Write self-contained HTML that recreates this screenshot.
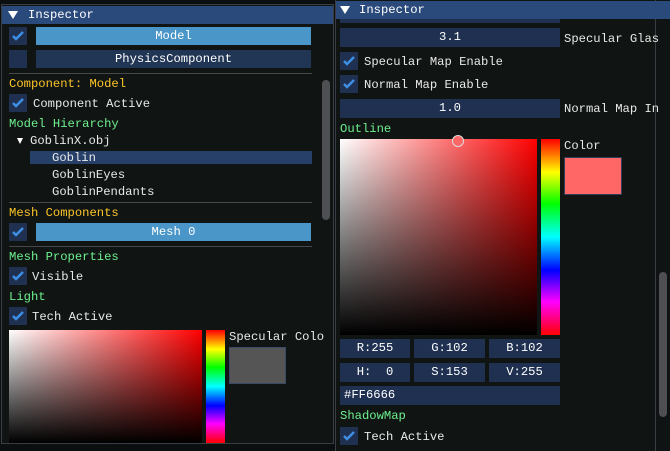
<!DOCTYPE html>
<html style="overflow:hidden;height:451px"><head><style>
*{margin:0;padding:0;box-sizing:border-box}
body{width:670px;height:451px;overflow:hidden;background:#0c0f0f;font-family:"Liberation Mono",monospace;font-size:12.2px;color:#e8e8e8;position:relative}
.a{position:absolute}
.win{position:absolute;background:#101514;border:1px solid #3a3d44}
.title{position:absolute;background:#2b4a7c;color:#fff;height:18px;line-height:18px}
.cb{position:absolute;width:18px;height:18px;background:#1f3050}
.cb svg{position:absolute;left:3px;top:4px}
.btn{position:absolute;height:18px;line-height:18px;text-align:center;color:#fff}
.lt{background:#4a96c8}
.dk{background:#213555}
.fld{position:absolute;background:#1f3050;height:19px;line-height:19px;text-align:center;color:#fff;white-space:pre}
.y{color:#fcc427}.g{color:#6ef08e}
.sep{position:absolute;height:1px;background:#45474d}
.t{position:absolute;white-space:pre;line-height:14px}
.sv{position:absolute;background:linear-gradient(to bottom,rgba(0,0,0,0),#000),linear-gradient(to right,#fff,#f00)}
.hue{position:absolute;background:linear-gradient(to bottom,#f00,#ff0 17%,#0f0 33%,#0ff 50%,#00f 67%,#f0f 83%,#f00)}
</style></head><body>
<div class="win" style="left:1px;top:4px;width:333px;height:440px"></div>
<div class="title" style="left:2px;top:6px;width:331px"><span class="a" style="left:6px;top:5px;width:0;height:0;border-left:5px solid transparent;border-right:5px solid transparent;border-top:8px solid #fff"></span><span class="a" style="left:26px">Inspector</span></div>
<div class="cb" style="left:9px;top:27px"><svg width="12" height="10"><path d="M1 5 L4 8 L11 1" stroke="#3d8fe6" stroke-width="2.5" fill="none"/></svg></div>
<div class="btn lt" style="left:36px;top:27px;width:275px">Model</div>
<div class="cb" style="left:9px;top:50px"></div>
<div class="btn dk" style="left:36px;top:50px;width:275px">PhysicsComponent</div>
<div class="sep" style="left:9px;top:73px;width:303px"></div>
<div class="t y" style="left:9px;top:77px">Component: Model</div>
<div class="cb" style="left:9px;top:94px"><svg width="12" height="10"><path d="M1 5 L4 8 L11 1" stroke="#3d8fe6" stroke-width="2.5" fill="none"/></svg></div>
<div class="t" style="left:33px;top:97px">Component Active</div>
<div class="t g" style="left:9px;top:117px">Model Hierarchy</div>
<span class="a" style="left:17px;top:138px;border-left:3.5px solid transparent;border-right:3.5px solid transparent;border-top:6px solid #fff"></span>
<div class="t" style="left:30px;top:134px">GoblinX.obj</div>
<div class="a" style="left:30px;top:151px;width:282px;height:13px;background:#27406a"></div>
<div class="t" style="left:52px;top:151px">Goblin</div>
<div class="t" style="left:52px;top:168px">GoblinEyes</div>
<div class="t" style="left:52px;top:185px">GoblinPendants</div>
<div class="sep" style="left:9px;top:202px;width:303px"></div>
<div class="t y" style="left:9px;top:206px">Mesh Components</div>
<div class="cb" style="left:9px;top:223px"><svg width="12" height="10"><path d="M1 5 L4 8 L11 1" stroke="#3d8fe6" stroke-width="2.5" fill="none"/></svg></div>
<div class="btn lt" style="left:36px;top:223px;width:275px">Mesh 0</div>
<div class="sep" style="left:9px;top:246px;width:303px"></div>
<div class="t g" style="left:9px;top:250px">Mesh Properties</div>
<div class="cb" style="left:9px;top:267px"><svg width="12" height="10"><path d="M1 5 L4 8 L11 1" stroke="#3d8fe6" stroke-width="2.5" fill="none"/></svg></div>
<div class="t" style="left:32px;top:270px">Visible</div>
<div class="t g" style="left:9px;top:290px">Light</div>
<div class="cb" style="left:9px;top:307px"><svg width="12" height="10"><path d="M1 5 L4 8 L11 1" stroke="#3d8fe6" stroke-width="2.5" fill="none"/></svg></div>
<div class="t" style="left:32px;top:310px">Tech Active</div>
<div class="sv" style="left:9px;top:330px;width:193px;height:113px"></div>
<div class="hue" style="left:206px;top:330px;width:19px;height:113px"></div>
<div class="t" style="left:229px;top:330px">Specular Colo</div>
<div class="a" style="left:229px;top:347px;width:57px;height:37px;background:#555;border:1px solid #3a4a66"></div>
<div class="a" style="left:322px;top:80px;width:8px;height:140px;background:#4d4f52;border-radius:4px"></div>

<div class="win" style="left:335px;top:-1px;width:321px;height:453px"></div>
<div class="a" style="left:656px;top:0;width:14px;height:451px;background:#0f1313"></div>
<div class="title" style="left:336px;top:1px;width:334px"><span class="a" style="left:4px;top:5px;border-left:5px solid transparent;border-right:5px solid transparent;border-top:8px solid #fff"></span><span class="a" style="left:23px">Inspector</span></div>
<div class="a" style="left:340px;top:19px;width:220px;height:4px;background:#1f3050"></div>
<div class="fld" style="left:340px;top:28px;width:220px">3.1</div>
<div class="t" style="left:564px;top:32px">Specular Glas</div>
<div class="cb" style="left:340px;top:52px"><svg width="12" height="10"><path d="M1 5 L4 8 L11 1" stroke="#3d8fe6" stroke-width="2.5" fill="none"/></svg></div>
<div class="t" style="left:364px;top:55px">Specular Map Enable</div>
<div class="cb" style="left:340px;top:75px"><svg width="12" height="10"><path d="M1 5 L4 8 L11 1" stroke="#3d8fe6" stroke-width="2.5" fill="none"/></svg></div>
<div class="t" style="left:364px;top:78px">Normal Map Enable</div>
<div class="fld" style="left:340px;top:99px;width:220px">1.0</div>
<div class="t" style="left:564px;top:102px">Normal Map In</div>
<div class="t g" style="left:340px;top:122px">Outline</div>
<div class="sv" style="left:340px;top:139px;width:197px;height:196px"></div>
<div class="a" style="left:452px;top:135px;width:12px;height:12px;border-radius:50%;background:#f66;border:1.5px solid #ddd"></div>
<div class="hue" style="left:541px;top:139px;width:19px;height:196px"></div>
<div class="t" style="left:564px;top:139px">Color</div>
<div class="a" style="left:564px;top:157px;width:58px;height:38px;background:#ff6666;border:1px solid #2d3d5a"></div>
<div class="fld" style="left:340px;top:339px;width:70px">R:255</div>
<div class="fld" style="left:414px;top:339px;width:71px">G:102</div>
<div class="fld" style="left:489px;top:339px;width:71px">B:102</div>
<div class="fld" style="left:340px;top:363px;width:70px">H:  0</div>
<div class="fld" style="left:414px;top:363px;width:71px">S:153</div>
<div class="fld" style="left:489px;top:363px;width:71px">V:255</div>
<div class="fld" style="left:340px;top:386px;width:220px;text-align:left;padding-left:4px">#FF6666</div>
<div class="t g" style="left:340px;top:409px">ShadowMap</div>
<div class="cb" style="left:340px;top:427px"><svg width="12" height="10"><path d="M1 5 L4 8 L11 1" stroke="#3d8fe6" stroke-width="2.5" fill="none"/></svg></div>
<div class="t" style="left:364px;top:430px">Tech Active</div>
<div class="a" style="left:659px;top:272px;width:8px;height:145px;background:#4d4f52;border-radius:4px"></div>
</body></html>
